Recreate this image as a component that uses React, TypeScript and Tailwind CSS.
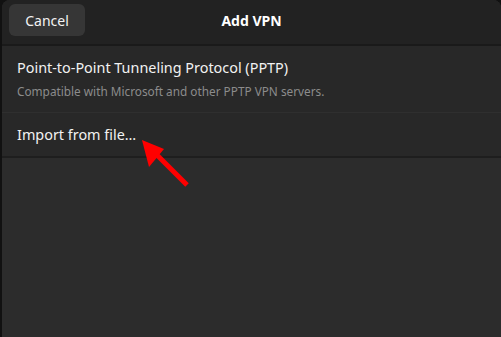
import React from 'react';

const Arrow = () => (
  <svg className="absolute left-[137px] top-[135px]" width="56" height="56" viewBox="0 0 56 56">
    <line x1="16" y1="16" x2="50" y2="50" stroke="#ff0000" strokeWidth="5" strokeLinecap="butt" />
    <polygon points="5,5 27,14 12,32" fill="#ff0000" />
  </svg>
);

const App = () => {
  return (
    <div className="w-[501px] h-[337px] bg-[#111111] relative overflow-hidden" style={{ fontFamily: '"Noto Sans", "Open Sans", sans-serif' }}>
      <div className="absolute inset-0 ml-[2px] rounded-tl-[8px] rounded-tr-[8px] bg-[#2c2c2c] flex flex-col overflow-hidden">
        <header className="h-[46px] bg-[#222222] border-b-2 border-[#1a1a1a] flex items-center relative shrink-0">
          <button className="ml-[7px] -mt-[4px] h-[32px] w-[76px] rounded-[6px] bg-[#363636] text-[14px] text-[#f2f2f2]">
            Cancel
          </button>
          <div className="absolute left-0 right-0 -mt-[4px] text-center text-[14px] font-bold text-white pointer-events-none">
            Add VPN
          </div>
        </header>
        <div className="bg-[#282828]">
          <div className="h-[67px] px-[15px] pt-[12px] flex flex-col gap-[4px] border-b border-[#2f2f2f]">
            <div className="text-[14.4px] leading-[20px] text-[#f2f2f2]">Point-to-Point Tunneling Protocol (PPTP)</div>
            <div className="text-[11.8px] leading-[18px] text-[#8c8c8c]">Compatible with Microsoft and other PPTP VPN servers.</div>
          </div>
          <div className="h-[45px] px-[15px] flex items-center border-b-2 border-[#1e1e1e]">
            <div className="text-[14.4px] text-[#f2f2f2]">Import from file…</div>
          </div>
        </div>
        <div className="flex-1" />
      </div>
      <Arrow />
    </div>
  );
};

export default App;
